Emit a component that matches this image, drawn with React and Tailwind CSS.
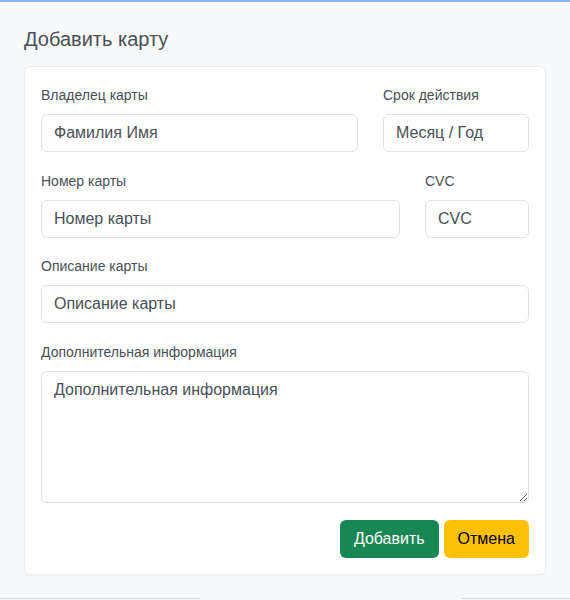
export default function App() {
  const inputCls =
    'w-full h-[38px] px-3 rounded-md border border-[#dee2e6] bg-white text-base text-[#212529] placeholder:text-[#495057] outline-none'
  const labelCls = 'block text-sm leading-[21px] text-[#495057] mb-2'

  return (
    <div className="w-[570px] h-[600px] overflow-hidden bg-[#f8f9fa] border-t-2 border-[#8ab4f8] flex flex-col font-['Liberation_Sans',Arial,sans-serif]">
      <div className="px-6 pt-[25px]">
        <h1 className="text-xl leading-6 font-medium text-[#495057]">Добавить карту</h1>
      </div>

      <div className="mx-6 mt-[15px] bg-white border border-[#e9ecef] rounded-md shadow-[0_1px_2px_rgba(0,0,0,0.04)] px-4 pt-[18px] pb-4">
        {/* row 1 */}
        <div className="flex gap-[25px]">
          <div className="flex-1">
            <label className={labelCls}>Владелец карты</label>
            <input className={inputCls} placeholder="Фамилия Имя" />
          </div>
          <div className="w-[146px]">
            <label className={labelCls}>Срок действия</label>
            <input className={inputCls} placeholder="Месяц / Год" />
          </div>
        </div>

        {/* row 2 */}
        <div className="flex gap-[25px] mt-[19px]">
          <div className="flex-1">
            <label className={labelCls}>Номер карты</label>
            <input className={inputCls} placeholder="Номер карты" />
          </div>
          <div className="w-[104px]">
            <label className={labelCls}>CVC</label>
            <input className={inputCls} placeholder="CVC" />
          </div>
        </div>

        <div className="mt-[18px]">
          <label className={labelCls}>Описание карты</label>
          <input className={inputCls} placeholder="Описание карты" />
        </div>

        <div className="mt-[19px]">
          <label className={labelCls}>Дополнительная информация</label>
          <textarea
            className="block w-full h-[132px] px-3 py-1.5 rounded-md border border-[#dee2e6] bg-white text-base leading-6 text-[#212529] placeholder:text-[#495057] outline-none"
            placeholder="Дополнительная информация"
          />
        </div>

        <div className="flex justify-end gap-[5px] mt-[17px]">
          <button className="h-[38px] px-[14px] rounded-md bg-[#198754] text-white text-base">Добавить</button>
          <button className="h-[38px] px-[14px] rounded-md bg-[#ffc107] text-black text-base">Отмена</button>
        </div>
      </div>

      <div className="mt-auto flex justify-between">
        <div className="w-[200px] h-[2px] border-t border-[#d6d6d6]" />
        <div className="w-[108px] h-[2px] border-t border-[#d6d6d6]" />
      </div>
    </div>
  )
}
